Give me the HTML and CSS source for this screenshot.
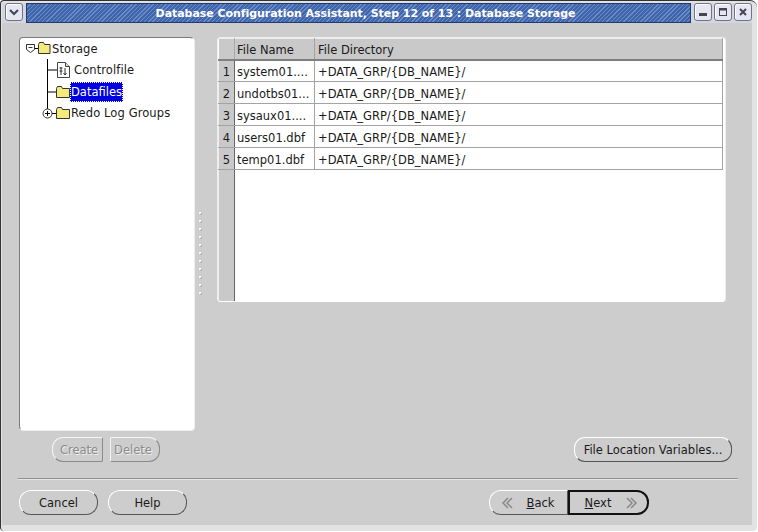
FILE: index.html
```html
<!DOCTYPE html>
<html lang="en">
<head>
<meta charset="utf-8">
<title>Database Configuration Assistant</title>
<link rel="stylesheet" href="styles.css">
</head>
<body>
<div class="window">
  <header class="titlebar">
    <button class="wm wm-menu"><svg width="12" height="8" viewBox="0 0 12 8"><path d="M2 2l4 4 4-4" fill="none" stroke="#445" stroke-width="2"/></svg></button>
    <div class="title"><span>Database Configuration Assistant, Step 12 of 13 : Database Storage</span></div>
    <div class="wm-group">
      <button class="wm"><svg width="10" height="10" viewBox="0 0 10 10"><rect x="1" y="6" width="8" height="3" fill="#445"/></svg></button>
      <button class="wm"><svg width="10" height="10" viewBox="0 0 10 10"><rect x="1.5" y="1.5" width="7" height="7" fill="none" stroke="#445"/><rect x="1" y="1" width="8" height="2.5" fill="#445"/></svg></button>
      <button class="wm"><svg width="10" height="10" viewBox="0 0 10 10"><path d="M2 2l6 6M8 2l-6 6" stroke="#445" stroke-width="2"/></svg></button>
    </div>
  </header>
  <main class="client">
    <div class="panes">
      <section class="left">
        <div class="tree">
          <div class="node">
            <svg class="icon" width="25" height="21" viewBox="0 0 25 21"><path d="M.5 6.500h8v5l-4 3-4-3z" fill="#fff" stroke="#333"/><path d="M2.500 9.500h4" stroke="#333"/><path d="M9 10.500h3" stroke="#000"/><path d="M12.500 6.500l1-2h4l1 2h5.500v9h-11.500z" fill="#f2ea7c" stroke="#333"/></svg>
            <span class="lbl">Storage</span>
          </div>
          <div class="node child gap-below">
            <svg class="icon" width="26" height="21" viewBox="0 0 26 21"><path d="M.5 0v22M1 11h9" stroke="#000"/><path d="M10.500 3.500h8l4 4v11h-12z" fill="#fff" stroke="#444"/><path d="M18.500 3.500v4h4" fill="#ddd" stroke="#444"/><path d="M14 8v8M12.500 9h3M12.500 12h3M18 9v7M16.500 14l1.500 2 1.500-2" fill="none" stroke="#333"/></svg>
            <span class="lbl">Controlfile</span>
          </div>
          <div class="node child">
            <svg class="icon" width="23" height="21" viewBox="0 0 23 21"><path d="M.5 0v21M1 11h9" stroke="#000"/><path d="M9.500 7.500l1-2h4l1 2h7v9h-13z" fill="#f2ea7c" stroke="#333"/></svg>
            <span class="lbl selected">Datafiles</span>
          </div>
          <div class="node child">
            <svg class="icon offset" width="32" height="21" viewBox="0 0 32 21"><path d="M9.500 0v7M14 11.500h5" stroke="#000"/><circle cx="9.500" cy="11.500" r="4.500" fill="#fff" stroke="#333"/><path d="M7 11.500h5M9.500 9v5" stroke="#000"/><path d="M18.500 7.500l1-2h4l1 2h7v9h-13z" fill="#f2ea7c" stroke="#333"/></svg>
            <span class="lbl">Redo Log Groups</span>
          </div>
        </div>
        <div class="tree-actions">
          <button class="btn disabled btn-create">Create</button>
          <button class="btn disabled btn-delete">Delete</button>
        </div>
      </section>
      <div class="splitter"><div class="dots"><i></i><i></i><i></i><i></i><i></i><i></i><i></i><i></i><i></i><i></i><i></i></div></div>
      <section class="right">
        <div class="grid-box">
          <table class="grid">
            <thead>
              <tr><th class="stub"></th><th class="name">File Name</th><th>File Directory</th></tr>
            </thead>
            <tbody>
              <tr><th class="stub">1</th><td>system01....</td><td>+DATA_GRP/{DB_NAME}/</td></tr>
              <tr><th class="stub">2</th><td>undotbs01...</td><td>+DATA_GRP/{DB_NAME}/</td></tr>
              <tr><th class="stub">3</th><td>sysaux01....</td><td>+DATA_GRP/{DB_NAME}/</td></tr>
              <tr><th class="stub">4</th><td>users01.dbf</td><td>+DATA_GRP/{DB_NAME}/</td></tr>
              <tr><th class="stub">5</th><td>temp01.dbf</td><td>+DATA_GRP/{DB_NAME}/</td></tr>
              <tr class="filler"><th class="stub"></th><td colspan="2"></td></tr>
            </tbody>
          </table>
        </div>
        <div class="right-actions"><button class="btn btn-vars">File Location Variables...</button></div>
      </section>
    </div>
    <hr class="sep">
    <footer class="footer">
      <div class="group">
        <button class="btn btn-foot">Cancel</button>
        <button class="btn btn-foot">Help</button>
      </div>
      <div class="nav">
        <button class="btn btn-back"><svg width="12" height="12" viewBox="0 0 12 12"><path d="M7 1L2 6l5 5M11 1L6 6l5 5" fill="none" stroke="#8a8a8a" stroke-width="1.500"/></svg><span><u>B</u>ack</span></button>
        <button class="btn btn-next"><span><u>N</u>ext</span><svg width="12" height="12" viewBox="0 0 12 12"><path d="M1 1l5 5-5 5M5 1l5 5-5 5" fill="none" stroke="#8a8a8a" stroke-width="1.500"/></svg></button>
      </div>
    </footer>
  </main>
</div>
</body>
</html>
```
FILE: styles.css
```css
* { box-sizing: border-box; }
html, body { margin: 0; padding: 0; background: #fff; }
body { width: 758px; height: 532px; overflow: hidden; font-family: "DejaVu Sans", sans-serif; font-size: 11.5px; color: #1a1a1a; }

.window {
  width: 757px; height: 531px;
  display: flex; flex-direction: column;
  background: #e2e2e2;
  border-top: 1px solid #333; border-left: 1px solid #333;
  border-radius: 4px 7px 4px 4px;
  padding: 2px 5px 6px 1px;
  overflow: hidden;
}
.titlebar { display: flex; height: 20px; flex: none; align-items: stretch; background: #d3d6de; }
.wm {
  width: 18px; height: 18px; padding: 0; margin: 0;
  display: flex; align-items: center; justify-content: center;
  background: #e4e7f2; border: 1px solid #6d7488; border-radius: 3px;
  box-shadow: inset 1px 1px 0 #fff;
}
.wm-menu { margin: 0 3px; }
.title {
  flex: 1; display: flex; align-items: center; justify-content: center;
  border: 1px solid #223a6e;
  background: repeating-linear-gradient(135deg, #3f65ad 0, #3f65ad 2px, #6d8cc6 2px, #6d8cc6 3px);
  color: #fff; font-weight: bold; font-size: 11px; letter-spacing: -0.050px; padding-left: 14px;
}
.wm-group { display: flex; gap: 2px; padding-left: 3px; width: 61px; }

.client { flex: 1; background: #cdcdcd; padding: 14px 13px 0 17px; display: flex; flex-direction: column; min-height: 0; }
.panes { display: flex; height: 425px; flex: none; }

.left { width: 175px; flex: none; display: flex; flex-direction: column; }
.tree {
  height: 394px; background: #fff; border: 1px solid; border-color: #7a7a7a #fff #fff #7a7a7a;
  border-radius: 4px; padding: 0 0 0 6px;
  box-shadow: 1px 1px 0 #eee;
}
.node { display: flex; align-items: center; height: 21px; }
.gap-below { margin-bottom: 1px; }
.child { padding-left: 21px; }
.icon { flex: none; overflow: visible; }
.offset { margin-left: -9px; }
.lbl { white-space: nowrap; padding: 3px 1px; letter-spacing: 0.100px; }
.selected { background: #0000e0; color: #fff; outline: 1px dotted #fff; outline-offset: -1px; letter-spacing: 0; }
.tree-actions { display: flex; gap: 7px; padding: 7px 0 0 33px; }

.btn {
  font: inherit; color: #1a1a1a; padding: 0; margin: 0; height: 25px; background: #cdcdcd;
  border: 1px solid; border-color: #fff #555 #555 #fff; border-radius: 11px;
  display: flex; align-items: center; justify-content: center;
}
.disabled { color: #8c8c8c; text-shadow: 1px 1px 0 #eee; border-color: #f4f4f4 #8a8a8a #8a8a8a #f4f4f4; }
.btn-create { width: 51px; border-radius: 11px 2px 2px 11px; padding-left: 3px; }
.btn-delete { width: 50px; border-radius: 2px 11px 11px 2px; padding-right: 4px; }

.splitter { width: 23px; flex: none; padding: 175px 0 0 5px; }
.dots { display: flex; flex-direction: column; gap: 6px; }
.dots i { display: block; width: 2px; height: 2px; background: #f8f8f8; box-shadow: 1px 1px 0 #b0b0b0; }

.right { width: 515px; flex: none; display: flex; flex-direction: column; }
.grid-box { width: 509px; height: 265px; border: 1px solid; border-color: #eee #eee #fff #eee; background: #fff; border-radius: 4px; overflow: hidden; }
.grid { width: 505px; height: 263px; border-collapse: collapse; table-layout: fixed; }
.grid th, .grid td { font-weight: normal; font-size: 11.5px; text-align: left; height: 22px; padding: 2px 0 0 2px; white-space: nowrap; overflow: hidden; border: 1px solid #a3a3a3; }
.grid tr > :last-child { padding-left: 3px; }
.grid thead th { height: 21px; background: #c9c9c9; border-bottom: 2px solid #808080; border-top: 1px solid #eee; border-left: 1px solid #f4f4f4; }
.grid .stub { width: 16px; background: #c9c9c9; padding: 2px 0 0; text-align: center; border-left: 1px solid #eee; border-right: 1px solid #666; }
.grid thead .stub { border-right: 1px solid #aaa; border-left: 0; }
.grid .name { width: 80px; }
.filler td { border: 0; height: auto; background: #fff; }
.filler th { height: auto; }
.filler .stub { border-bottom: 0; }

.right-actions { display: flex; justify-content: flex-end; padding-top: 135px; }
.btn-vars { width: 158px; }

.sep { margin: 16px 0 0 -1px; width: 720px; height: 2px; border: 0; border-top: 1px solid #8f8f8f; border-bottom: 1px solid #e6e6e6; flex: none; }
.footer { display: flex; justify-content: space-between; padding-top: 10px; width: 630px; }
.group { display: flex; gap: 10px; }
.nav { display: flex; }
.btn-foot { width: 79px; border-radius: 12px; }
.btn-back { width: 79px; border-radius: 12px 0 0 12px; gap: 14px; padding-right: 2px; }
.btn-next { width: 81px; border: 2px solid #111; border-radius: 0 12px 12px 0; gap: 15px; padding-left: 6px; }
```
